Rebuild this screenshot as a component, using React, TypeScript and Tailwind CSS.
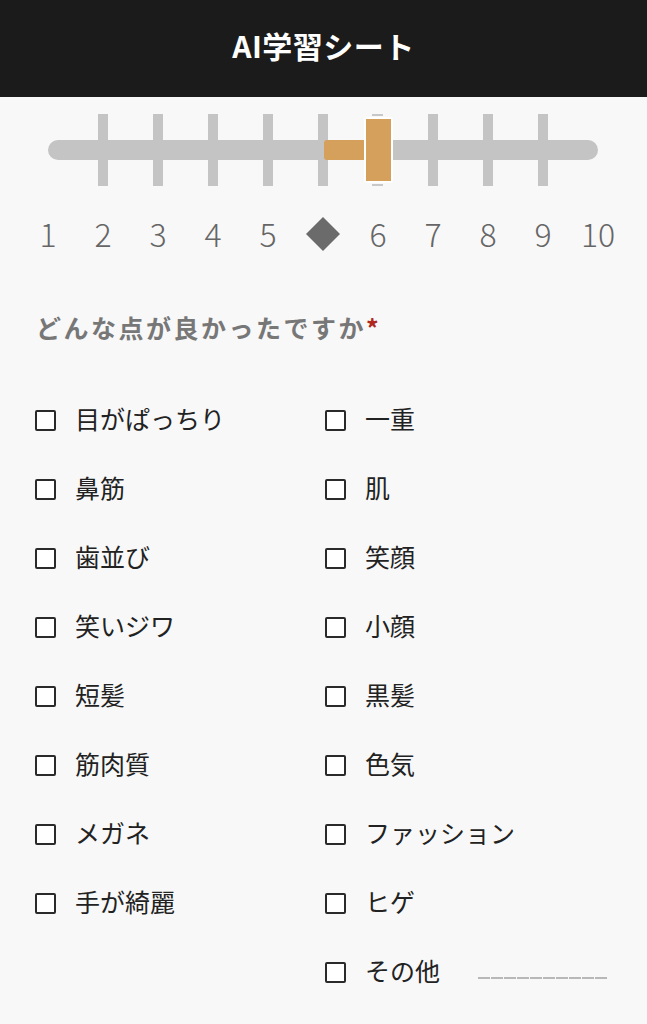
import React from 'react'

const font = { fontFamily: '"Noto Sans CJK JP", "Noto Sans", sans-serif' }

const labels = ['1', '2', '3', '4', '5', '◆', '6', '7', '8', '9', '10']

const leftItems = ['目がぱっちり', '鼻筋', '歯並び', '笑いジワ', '短髪', '筋肉質', 'メガネ', '手が綺麗']
const rightItems = ['一重', '肌', '笑顔', '小顔', '黒髪', '色気', 'ファッション', 'ヒゲ', 'その他']

function Scale() {
  // positions 0..10, 55px apart, track from 48 to 598
  return (
    <div className="relative h-[170px] w-[647px]">
      <div className="absolute left-[48px] top-[43px] h-[20px] w-[550px] rounded-full bg-[#c4c4c4]" />
      {[1, 2, 3, 4, 5, 7, 8, 9].map(i => (
        <div
          key={i}
          className="absolute top-[17px] h-[72px] w-[10px] bg-[#c4c4c4]"
          style={{ left: 48 + i * 55 - 5 }}
        />
      ))}
      {/* filled segment */}
      <div className="absolute left-[324px] top-[43px] h-[20px] w-[40px] rounded-l-[3px] bg-[#d4a05b]" />
      {/* thumb */}
      <div className="absolute left-[372px] top-[17px] h-[2px] w-[11px] bg-[#c8c8c8]" />
      <div className="absolute left-[372px] top-[87px] h-[2px] w-[11px] bg-[#c8c8c8]" />
      <div className="absolute left-[364px] top-[20px] h-[66px] w-[29px] rounded-[3px] bg-white p-[2px]">
        <div className="h-full w-full bg-[#d4a05b]" />
      </div>
      <div className="absolute left-0 top-[114px] h-[44px] w-full">
        {labels.map((l, i) => (
          <div
            key={i}
            className="absolute top-0 flex h-[44px] w-[50px] items-center justify-center"
            style={{ left: 48 + i * 55 - 25 }}
          >
            {l === '◆' ? (
              <div className="mt-[2px] h-[24px] w-[24px] rotate-45 bg-[#6b6b6b]" />
            ) : (
              <span className="text-[32px] font-light leading-none text-[#666]">{l}</span>
            )}
          </div>
        ))}
      </div>
    </div>
  )
}

function Item({ label, other }: { label: string; other?: boolean }) {
  return (
    <div className="flex h-[69px] items-center">
      <span className="h-[21px] w-[21px] shrink-0 rounded-[2px] border-2 border-[#2a2a2a] bg-white" />
      <span className="ml-[19px] mb-[3px] text-[25px] leading-none text-[#222]">{label}</span>
      {other && (
        <span className="ml-[38px] mt-[12px] flex gap-[1px]">
          {Array.from({ length: 10 }).map((_, i) => (
            <span key={i} className="h-[1.5px] w-[12px] bg-[#b8b8b8]" />
          ))}
        </span>
      )}
    </div>
  )
}

export default function App() {
  return (
    <div className="min-h-[1024px] w-[647px] overflow-hidden bg-[#f8f8f8]" style={font}>
      <header className="flex h-[97px] items-center justify-center bg-[#1b1b1b] pb-[6px]">
        <h1 className="text-[30px] font-bold tracking-[0.5px] text-white">AI学習シート</h1>
      </header>
      <Scale />
      <div className="px-[36px] pt-[42px]">
        <p className="text-[25px] font-bold tracking-[2.5px] text-[#777]">
          どんな点が良かったですか<span className="text-[#b0281c]">*</span>
        </p>
      </div>
      <div className="mt-[39px] grid grid-cols-[290px_1fr] pl-[35px]">
        <div className="flex flex-col">
          {leftItems.map(l => (
            <Item key={l} label={l} />
          ))}
        </div>
        <div className="flex flex-col">
          {rightItems.map(l => (
            <Item key={l} label={l} other={l === 'その他'} />
          ))}
        </div>
      </div>
    </div>
  )
}
